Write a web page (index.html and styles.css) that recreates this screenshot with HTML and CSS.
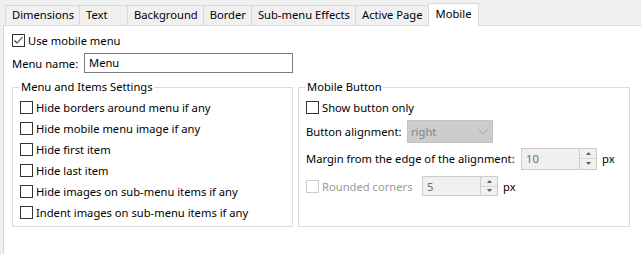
FILE: index.html
```html
<!DOCTYPE html>
<html lang="en">
<head>
    <meta charset="UTF-8">
    <title>Menu Settings - Mobile</title>
    <link rel="stylesheet" href="styles.css">
</head>
<body>
    <div class="tabstrip">
        <div class="tab">Dimensions</div>
        <div class="tab">Text</div>
        <div class="tab">Background</div>
        <div class="tab">Border</div>
        <div class="tab">Sub-menu Effects</div>
        <div class="tab">Active Page</div>
        <div class="tab active">Mobile</div>
    </div>

    <div class="panel">
        <label class="check top-check">
            <span class="box">
                <svg width="11" height="11" viewBox="0 0 11 11"><path d="M1.5 5.5 L4 8 L9.5 2" fill="none" stroke="#333" stroke-width="1.1"/></svg>
            </span>
            Use mobile menu
        </label>

        <div class="name-row">
            <span class="name-label">Menu name:</span>
            <span class="textbox">Menu</span>
        </div>

        <div class="groups">
            <fieldset class="group group-left">
                <legend>Menu and Items Settings</legend>
                <label class="check"><span class="box"></span>Hide borders around menu if any</label>
                <label class="check"><span class="box"></span>Hide mobile menu image if any</label>
                <label class="check"><span class="box"></span>Hide first item</label>
                <label class="check"><span class="box"></span>Hide last item</label>
                <label class="check"><span class="box"></span>Hide images on sub-menu items if any</label>
                <label class="check"><span class="box"></span>Indent images on sub-menu items if any</label>
            </fieldset>

            <fieldset class="group group-right">
                <legend>Mobile Button</legend>
                <label class="check"><span class="box"></span>Show button only</label>

                <div class="line line-align">
                    <span class="align-label">Button alignment:</span>
                    <span class="combo">
                        right
                        <svg width="10" height="6" viewBox="0 0 10 6"><path d="M0.5 0.5 L5 5 L9.5 0.5" fill="none" stroke="#a6a6a6" stroke-width="1"/></svg>
                    </span>
                </div>

                <div class="line line-margin">
                    <span class="margin-label">Margin from the edge of the alignment:</span>
                    <span class="spin spin-tall">
                        <span class="spin-value">10</span>
                        <span class="spin-btns">
                            <span class="spin-btn"><svg width="5" height="3" viewBox="0 0 5 3"><path d="M0 3 L2.5 0 L5 3 Z" fill="#606060"/></svg></span>
                            <span class="spin-btn"><svg width="5" height="3" viewBox="0 0 5 3"><path d="M0 0 L2.5 3 L5 0 Z" fill="#606060"/></svg></span>
                        </span>
                    </span>
                    <span class="unit">px</span>
                </div>

                <div class="line line-round">
                    <label class="check disabled round-label"><span class="box"></span>Rounded corners</label>
                    <span class="spin">
                        <span class="spin-value">5</span>
                        <span class="spin-btns">
                            <span class="spin-btn"><svg width="5" height="3" viewBox="0 0 5 3"><path d="M0 3 L2.5 0 L5 3 Z" fill="#606060"/></svg></span>
                            <span class="spin-btn"><svg width="5" height="3" viewBox="0 0 5 3"><path d="M0 0 L2.5 3 L5 0 Z" fill="#606060"/></svg></span>
                        </span>
                    </span>
                    <span class="unit">px</span>
                </div>
            </fieldset>
        </div>
    </div>
</body>
</html>
```

FILE: styles.css
```css
html, body {
    margin: 0;
    height: 100%;
    overflow: hidden;
}
body {
    background: #f0f0f0;
    font-family: "Noto Sans", "Open Sans", sans-serif;
    font-size: 11.2px;
    color: #000;
}

/* tab strip */
.tabstrip {
    display: flex;
    align-items: flex-end;
    height: 25px;
    padding-left: 5px;
    box-sizing: border-box;
}
.tab {
    height: 20px;
    box-sizing: border-box;
    padding: 0 5px 0 6px;
    min-width: 48px;
    border: 1px solid #d9d9d9;
    border-left: none;
    border-bottom: none;
    line-height: 18px;
    background: #f0f0f0;
    white-space: nowrap;
}
.tab:first-child {
    border-left: 1px solid #d9d9d9;
}
.tab.active {
    height: 23px;
    margin-bottom: -1px;
    padding: 0 7px 0 7px;
    border-left: 1px solid #d9d9d9;
    margin-left: -1px;
    background: #fff;
    line-height: 20px;
    position: relative;
    z-index: 1;
}

/* page */
.panel {
    background: #fff;
    margin-left: 3px;
    height: 240px;
    border-top: 1px solid #d9d9d9;
    border-left: 1px solid #d9d9d9;
    padding: 6px 0 0 8px;
    box-sizing: border-box;
}

.check {
    display: flex;
    align-items: center;
    gap: 3px;
    height: 21px;
    white-space: nowrap;
}
.top-check {
    height: 17px;
}
.box {
    width: 13px;
    height: 13px;
    box-sizing: border-box;
    border: 1px solid #333;
    background: #fff;
    display: flex;
    align-items: center;
    justify-content: center;
    flex: none;
}
.check.disabled {
    color: #9a9a9a;
}
.check.disabled .box {
    border-color: #cccccc;
}

.name-row {
    display: flex;
    align-items: center;
    margin-top: 4px;
    height: 20px;
}
.name-label {
    width: 72px;
}
.textbox {
    width: 209px;
    height: 20px;
    box-sizing: border-box;
    border: 1px solid #7a7a7a;
    padding-left: 4px;
    line-height: 18px;
}

/* group boxes */
.groups {
    display: flex;
    gap: 5px;
    margin-top: 6px;
}
.group {
    margin: 0;
    padding: 2px 7px 0 7px;
    border: 1px solid #dcdcdc;
    height: 148px;
    box-sizing: border-box;
    min-width: 0;
}
.group legend {
    padding: 0 1px;
    line-height: 16px;
}
.group-left {
    width: 281px;
}
.group-right {
    width: 332px;
}

.line {
    display: flex;
    align-items: center;
    white-space: nowrap;
}
.line-align {
    margin-top: 2px;
    height: 23px;
}
.line-margin {
    margin-top: 5px;
    height: 21px;
}
.line-round {
    margin-top: 7px;
    height: 20px;
}
.align-label {
    width: 101px;
}
.margin-label {
    width: 215px;
}
.round-label {
    width: 116px;
}

.combo {
    width: 86px;
    height: 23px;
    box-sizing: border-box;
    background: #cccccc;
    border: 1px solid #c4c4c4;
    color: #838383;
    padding: 0 4px 0 3px;
    display: flex;
    align-items: center;
    justify-content: space-between;
}

.spin {
    width: 76px;
    height: 20px;
    box-sizing: border-box;
    border: 1px solid #cccccc;
    background: #f0f0f0;
    display: flex;
}
.spin-tall {
    height: 22px;
}
.spin-value {
    flex: 1;
    padding-left: 4px;
    color: #6d6d6d;
    display: flex;
    align-items: center;
}
.spin-btns {
    width: 16px;
    display: flex;
    flex-direction: column;
    border-left: 1px solid #cccccc;
}
.spin-btn {
    flex: 1;
    display: flex;
    align-items: center;
    justify-content: center;
    background: #f0f0f0;
}
.spin-btn:first-child {
    border-bottom: 1px solid #d6d6d6;
}
.unit {
    margin-left: 5px;
}
```
